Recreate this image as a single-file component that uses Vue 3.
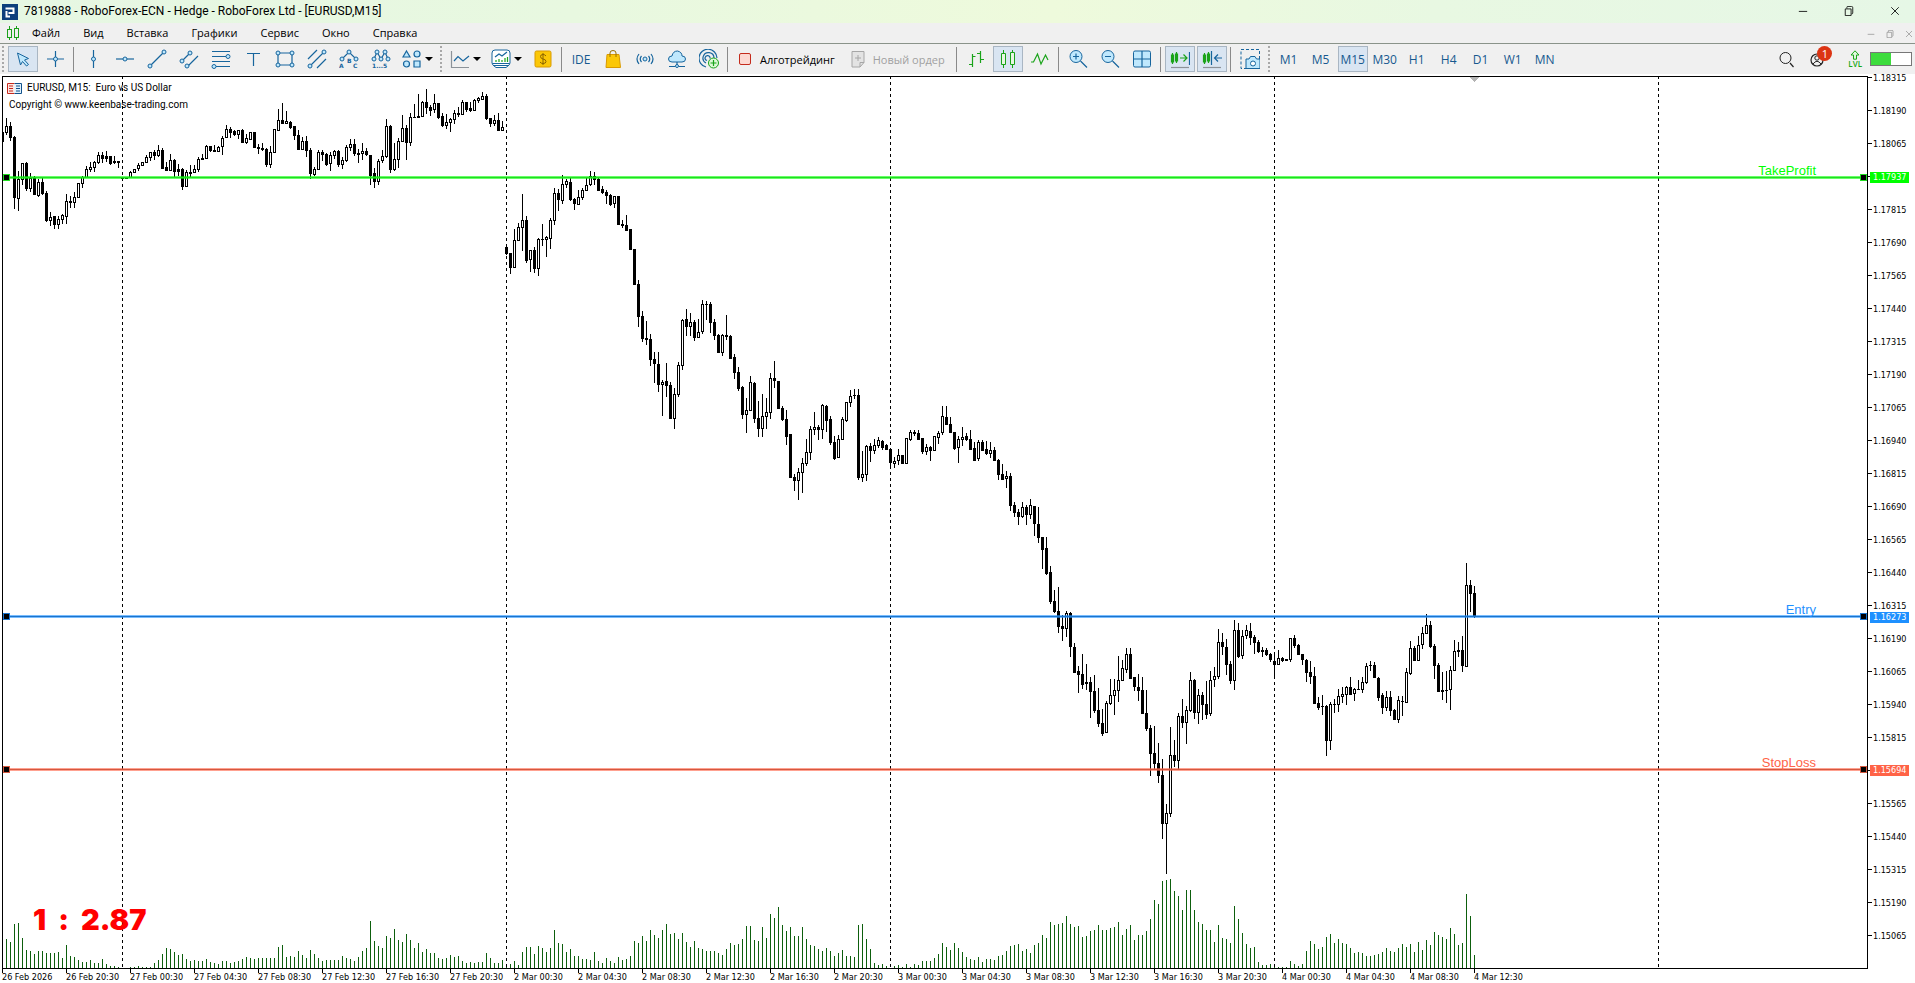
<template>
  <div class="terminal">
    <header class="title-bar">
      <svg class="logo" viewBox="0 0 16 16">
        <rect width="16" height="16" fill="#0d3f7c" />
        <path d="M3.500 4.500H11.500V9H6.500M4.500 7V12.500H8" fill="none" stroke="#fff" stroke-width="2" />
      </svg>
      <h1>7819888 - RoboForex-ECN - Hedge - RoboForex Ltd - [EURUSD,M15]</h1>
      <div class="window-buttons">
        <button v-for="b in windowButtons" :key="b.label" :aria-label="b.label">
          <svg viewBox="0 0 12 12" v-html="b.icon"></svg>
        </button>
      </div>
    </header>

    <nav class="menu-bar">
      <svg class="menu-logo" viewBox="0 0 14 14">
        <path d="M3.500 0V14M10.500 0V14" stroke="#1ba11b" />
        <rect x="1.500" y="3.500" width="4" height="8" fill="#f0f0f0" stroke="#1ba11b" />
        <rect x="8.500" y="2.500" width="4" height="9" fill="#f0f0f0" stroke="#1ba11b" />
      </svg>
      <button v-for="item in menu" :key="item" class="menu-item">{{ item }}</button>
      <div class="mdi-buttons">
        <button v-for="b in windowButtons" :key="b.label" :aria-label="b.label + ' chart'">
          <svg viewBox="0 0 12 12" v-html="b.icon"></svg>
        </button>
      </div>
    </nav>

    <div class="toolbar">
      <template v-for="(item, i) in tools" :key="i">
        <span v-if="item.type === 'grip'" class="grip"></span>
        <span v-else-if="item.type === 'sep'" class="sep"></span>
        <button
          v-else
          class="tool"
          :class="[item.type, { active: item.active }]"
          :disabled="item.disabled"
          :aria-label="item.text ? null : item.icon"
        >
          <svg v-if="item.icon" class="tool-icon" viewBox="0 0 20 20" v-html="icons[item.icon]"></svg>
          <span v-if="item.text">{{ item.text }}</span>
          <i v-if="item.type === 'drop'" class="arrow"></i>
        </button>
      </template>
      <div class="status">
        <button class="tool" aria-label="search">
          <svg class="tool-icon" viewBox="0 0 20 20" v-html="icons.search"></svg>
        </button>
        <button class="tool account" aria-label="account">
          <svg class="tool-icon" viewBox="0 0 20 20" v-html="icons.account"></svg>
          <b class="badge">1</b>
        </button>
        <div class="level">
          <svg viewBox="0 0 10 10"><path d="M5 .800L9 5H6.500V9.200H3.500V5H1z" fill="#e2f6df" stroke="#18a818" /></svg>
          <span>LVL</span>
        </div>
        <div class="battery"><i></i></div>
      </div>
    </div>

    <main class="chart">
      <div class="plot">
        <svg class="canvas" viewBox="0 0 1864 891" preserveAspectRatio="none" shape-rendering="crispEdges">
          <path :d="volumePath" fill="#0d5f0d" />
          <line
            v-for="x in sessions"
            :key="x"
            :x1="x"
            :x2="x"
            y1="-1"
            y2="891"
            stroke="#000"
            stroke-dasharray="3 3"
          />
          <path :d="candlePaths.black" fill="#000" />
          <path :d="candlePaths.white" fill="#fff" />
          <path d="M1467 0h9l-4.500 5z" fill="#b4b4b4" />
        </svg>
        <div
          v-for="lv in levels"
          :key="lv.name"
          class="level-line"
          :style="{ top: toPercent(lv.y), '--color': lv.color, '--core': lv.core }"
        >
          <i class="handle"></i>
          <span>{{ lv.name }}</span>
          <i class="handle"></i>
        </div>
        <div class="chart-title">
          <svg viewBox="0 0 15 11">
            <path d="M7.500 .500H.500V10.500H7.500" fill="#fde6e2" stroke="#c5281c" />
            <path d="M7.500 .500H14.500V10.500H7.500" fill="#dff0fc" stroke="#11528c" />
            <path d="M2 3H6M2 5.500H6M2 8H6" stroke="#c5281c" />
            <path d="M9 3H13M9 5.500H13M9 8H13" stroke="#11528c" />
          </svg>
          <span>EURUSD, M15:&nbsp; Euro vs US Dollar</span>
        </div>
        <div class="copyright">Copyright © www.keenbase-trading.com</div>
        <div class="ratio"><span>1</span><span>:</span><span>2.87</span></div>
      </div>

      <div class="price-axis">
        <div class="price-list">
          <div v-for="p in prices" :key="p" class="price">
            <span v-if="!covered.includes(p)">{{ p }}</span>
          </div>
        </div>
        <div
          v-for="lv in levels"
          :key="lv.name"
          class="price-tag"
          :style="{ top: toPercent(lv.y), background: lv.color }"
        >{{ lv.price }}</div>
      </div>

      <div class="time-axis">
        <span v-for="t in times" :key="t">{{ t }}</span>
      </div>
    </main>
  </div>
</template>

<script setup>
import { computed } from 'vue'

const menu = ['Файл', 'Вид', 'Вставка', 'Графики', 'Сервис', 'Окно', 'Справка']

const windowButtons = [
  { label: 'minimize', icon: '<path d="M1 6.500H11" stroke="currentColor"/>' },
  {
    label: 'restore',
    icon: '<path d="M1.500 3.500H8.500V11.500H1.500zM3.500 3V1.500Q3.500 .500 4.500 .500H9Q10.500 .500 10.500 2V8.500Q10.500 9.500 9 9.500" fill="none" stroke="currentColor"/>',
  },
  { label: 'close', icon: '<path d="M1.500 1.500L10.500 10.500M10.500 1.500L1.500 10.500" stroke="currentColor"/>' },
]

// ---------- toolbar icons, 20x20 ----------
const BLUE = '#17659d'
const SKY = '#bfe8fd'
const GREEN = '#19a319'

const dots = (points, r = 2) =>
  points.map(([x, y]) => `<circle cx="${x}" cy="${y}" r="${r}" fill="${SKY}" stroke="${BLUE}"/>`).join('')
const lines = (d, color = BLUE) => `<path d="${d}" fill="none" stroke="${color}" stroke-width="1.200"/>`
const letters = (text, x) =>
  `<text x="${x}" y="19" font-size="6" font-weight="700" font-family="DejaVu Sans" fill="${BLUE}">${text}</text>`

const icons = {
  cursor: `<path d="M4.500 4L15.500 9.500L11.500 11L15.500 15.500L13.500 17L9.500 12.500L7.500 16z" fill="${SKY}" stroke="${BLUE}"/>`,
  crosshair: lines('M10.500 2V18M2 10H19') + dots([[10.5, 10]]),
  vertical: lines('M10.500 1V19') + dots([[10.5, 10]]),
  horizontal: lines('M1 10H19') + dots([[10, 10]]),
  trend: lines('M3 17L17 3') + dots([[3, 17], [17, 3]]),
  channel: lines('M3 12L11 4M9 17L19 7') + dots([[3, 12], [11, 4], [8, 17]]),
  fibo: lines('M1 2.500H19M1 7.500H15M1 12.500H19M5 17.500H19') + dots([[17, 7.5], [3, 17.5]]),
  text: lines('M4 4.500H17M10.500 4.500V17'),
  rectangle: lines('M3 4H17V16H3z') + dots([[3, 4], [17, 4], [3, 16], [17, 16]]),
  fork: lines('M1 10L10 1M3 17L17 3M10 19L19 10') + dots([[3, 17], [17, 3]]),
  abc: lines('M3 10L10 3L17 10') + dots([[3, 10], [10, 3], [17, 10]]) + letters('A', 0) +
    `<text x="8" y="14" font-size="6" font-weight="700" font-family="DejaVu Sans" fill="${BLUE}">B</text>` + letters('C', 14),
  waves: lines('M3 10L6 3L10 10L14 3L17 10') + dots([[3, 10], [6, 3], [10, 10], [14, 3], [17, 10]]) + letters('1...5', 1),
  shapes: `<g fill="${SKY}" stroke="${BLUE}" stroke-width="1.200"><path d="M4.500 2L8 8H1z"/><circle cx="15" cy="5" r="3"/><circle cx="4.500" cy="15" r="3"/><path d="M12 12H18V18H12z"/></g>`,
  line: lines('M1.500 2V18.500H19', '#8c9298') + lines('M4 12L8 7.500L13 12L19 7'),
  indicators: `<path d="M1 4Q1 1 4 1H16Q19 1 19 4V14Q19 16 15 18.500H5Q1 16 1 14z" fill="#fff" stroke="${BLUE}"/>` +
    lines('M4 8L8 5L11 7L16 3M1.500 14.500H18.500M3 16.500H17') + lines('M5 13V11M8 13V10M11 13V11M14 13V9M16.500 13V8', GREEN),
  dollar: '<rect x="2" y="2" width="16" height="16" rx="1.500" fill="#fbc707" stroke="#d99a00"/><path d="M13 7Q12 5.500 10 5.500Q7.500 5.500 7.500 7.500Q7.500 9.500 10 10Q13 10.500 13 12.500Q13 14.500 10 14.500Q8 14.500 7 13M10 4V16" fill="none" stroke="#8a6400"/>',
  market: '<path d="M4 5.500H16L17.500 18.500H3z" fill="#fbc707" stroke="#d99a00"/><path d="M7 8V4Q7 1.500 10 1.500Q13 1.500 13 4V8" fill="none" stroke="#9a7000"/>',
  signals: dots([[10, 10]]) + lines('M6.500 13Q4 10 6.500 7M4 15Q0 10 4 5M13.500 13Q16 10 13.500 7M16 15Q20 10 16 5'),
  cloud: `<path d="M5 13Q1.500 13 1.500 10Q1.500 7 5 7Q6 2 10.500 2Q15 3 15 7Q18.500 7 18.500 10Q18.500 13 15 13z" fill="${SKY}" stroke="${BLUE}"/>` + lines('M10 13V16M2 17.500H8M12 17.500H18') + dots([[10, 17]], 1.5),
  radar: lines('M7 18A9 9 0 1 1 18 9M7 14A5.500 5.500 0 1 1 15 9M8 11.500A2.500 2.500 0 1 1 11 9.500') +
    `<circle cx="14.500" cy="14" r="5" fill="#dcf8d7" stroke="${GREEN}"/>` + lines('M11.500 14H17.500M14.500 11V17', GREEN),
  algo: '<rect x="4.500" y="4.500" width="11" height="11" rx="1.500" fill="#fcd9d2" stroke="#c42b1c"/>',
  order: '<path d="M4 2.500H16V13.500L12 18H4z" fill="#e3e3e3" stroke="#a6a6a6"/><path d="M16 13.500H12V18M7 9H13M10 6V12" fill="none" stroke="#a6a6a6"/>',
  bars: lines('M6.500 5V18M3 15.500H6.500M6.500 7.500H9.500M14.500 2V14M11 4.500H14.500M14.500 10.500H18', GREEN),
  candles: `<g fill="#e8f6e3" stroke="${GREEN}"><path d="M5.500 1V19M14.500 1V19"/><path d="M3.500 4.500H7.500V15.500H3.500zM12.500 3.500H16.500V15.500H12.500z"/></g>`,
  curve: lines('M1 13H3.500L7.500 5L11 15L15.500 6L18 11', GREEN),
  zoomIn: `<circle cx="8" cy="7.500" r="6" fill="${SKY}" stroke="${BLUE}"/>` + lines('M12.500 12L19 18.500M5 7.500H11M8 4.500V10.500'),
  zoomOut: `<circle cx="8" cy="7.500" r="6" fill="${SKY}" stroke="${BLUE}"/>` + lines('M12.500 12L19 18.500M5 7.500H11'),
  tile: `<rect x="1.500" y="2" width="17" height="16" rx="1.500" fill="${SKY}" stroke="${BLUE}"/>` + lines('M10 2V18M1.500 10H18.500'),
  autoscroll: lines('M19.500 3V16') + lines('M2.500 4V15M6.500 3V14M1.500 6H3.500V13H1.500zM5.500 5H7.500V12H5.500zM10 9H17M13.500 5.500L17 9L13.500 12.500', GREEN) + lines('M1 18.500H19', '#8c9298'),
  shift: lines('M9.500 2V16M20 9H13M16 5.500L12.500 9L16 12.500') + lines('M2.500 4V15M6.500 3V14M1.500 6H3.500V13H1.500zM5.500 5H7.500V12H5.500z', GREEN) + lines('M1 18.500H19', '#8c9298'),
  camera: `<path d="M1 .500H19.500V19.500H1z" fill="none" stroke="${BLUE}" stroke-dasharray="3 2"/><path d="M6 10H9L10.500 7.500H15L16.500 10H20V19.500H6z" fill="${SKY}" stroke="${BLUE}"/><circle cx="13" cy="14.500" r="2.500" fill="#fff" stroke="${BLUE}"/>`,
  search: lines('M14 14L17.500 18', '#222') + '<circle cx="9.500" cy="9" r="5.500" fill="none" stroke="#222"/>',
  account: '<circle cx="9" cy="11" r="6" fill="none" stroke="#222" stroke-width="1.200"/><circle cx="9" cy="9" r="2.200" fill="none" stroke="#222"/><path d="M5 15Q9 9.500 13 15" fill="none" stroke="#222"/>',
}

const icon = (...names) => names.map((name) => ({ type: 'icon', icon: name }))
const sep = { type: 'sep' }
const grip = { type: 'grip' }

const tools = [
  grip,
  { type: 'icon', icon: 'cursor', active: true },
  ...icon('crosshair'),
  sep,
  ...icon('vertical', 'horizontal', 'trend', 'channel', 'fibo', 'text', 'rectangle', 'fork', 'abc', 'waves'),
  { type: 'drop', icon: 'shapes' },
  grip,
  { type: 'drop', icon: 'line' },
  { type: 'drop', icon: 'indicators' },
  ...icon('dollar'),
  sep,
  { type: 'label', text: 'IDE' },
  ...icon('market', 'signals', 'cloud', 'radar'),
  sep,
  { type: 'wide', icon: 'algo', text: 'Алготрейдинг' },
  { type: 'wide', icon: 'order', text: 'Новый ордер', disabled: true },
  sep,
  ...icon('bars'),
  { type: 'icon', icon: 'candles', active: true },
  ...icon('curve'),
  sep,
  ...icon('zoomIn', 'zoomOut', 'tile'),
  sep,
  { type: 'icon', icon: 'autoscroll', active: true },
  { type: 'icon', icon: 'shift', active: true },
  sep,
  ...icon('camera'),
  grip,
  ...['M1', 'M5', 'M15', 'M30', 'H1', 'H4', 'D1', 'W1', 'MN'].map((text) => ({
    type: 'label',
    text,
    active: text === 'M15',
  })),
]

// ---------- axes ----------
const prices = Array.from({ length: 27 }, (_, i) => ((118315 - i * 125) / 100000).toFixed(5))
// these two sit under the level tags
const covered = ['1.17940', '1.15690']

const hours = ['00:30', '04:30', '08:30', '12:30', '16:30', '20:30']
const times = [
  '26 Feb 2026',
  '26 Feb 20:30',
  ...['27 Feb', '2 Mar', '3 Mar'].flatMap((day) => hours.map((h) => `${day} ${h}`)),
  ...hours.slice(0, 4).map((h) => `4 Mar ${h}`),
]

const levels = [
  { name: 'TakeProfit', price: '1.17937', y: 100, color: '#00ff00', core: '#22dd22' },
  { name: 'Entry', price: '1.16273', y: 539, color: '#1e90ff', core: '#1b74cc' },
  { name: 'StopLoss', price: '1.15694', y: 692, color: '#ff6347', core: '#d4583f' },
]
const toPercent = (y) => `${((y + 0.5) / 891) * 100}%`

const sessions = [119.5, 503.5, 887.5, 1271.5, 1655.5]

// ---------- candles ----------
// [open, high, low, close], offset down from the top of the block
const blocks = [
  {
    top: 3,
    bars: [
      [52,52,61,61],[52,38,54,46],[46,42,60,57],[57,56,128,117],[118,91,130,99],[99,83,104,83],[83,82,110,108],[108,93,111,98],
      [98,96,114,114],[115,99,116,102],[102,98,114,113],[113,111,141,140],[140,132,145,137],[136,136,148,144],[144,136,148,139],
      [139,134,143,135],[136,114,143,121],[121,116,127,122],[122,112,127,117],[117,103,117,103],[103,96,107,97],[97,86,97,89],
      [89,82,91,87],[87,81,91,82],[82,72,83,75],[75,72,82,78],[76,71,81,78],[76,76,84,83],[81,76,83,82],[81,81,87,82],
      [98,98,98,98],[98,98,98,98],[97,91,97,92],[92,89,92,89],[88,83,90,85],[85,82,85,82],[82,75,82,77],[77,72,80,72],
      [72,70,79,75],[75,65,76,70],[70,68,88,88],[87,82,90,90],[90,74,90,80],[80,79,96,91],[89,84,95,91],[89,88,109,106],
      [106,90,106,92],[92,85,97,93],[92,85,92,89],[89,77,91,79],[79,74,79,78],[78,65,78,66],[66,66,71,70],[70,65,71,71],
      [71,66,71,67],[66,56,74,58],[57,45,57,49],[49,47,57,52],[51,50,55,54],[54,50,58,50],[50,49,62,62],[62,54,63,58],
      [59,52,59,52],[52,52,67,67],[67,64,73,68],[68,63,70,69],[69,68,86,84],[84,66,87,72],[72,49,72,49],[50,29,50,40],
      [40,23,43,43],[43,31,43,41],[42,41,48,47],[46,46,59,55],[55,50,69,69],[69,57,69,61],[61,56,76,70],[70,68,98,93],
      [94,87,95,89],[89,70,89,72],[72,70,80,74],[74,73,85,84],[83,72,90,75],[75,70,78,71],[71,70,86,84],[84,77,88,80],
      [80,65,81,67],[67,59,70,64],[64,59,75,73],[73,69,82,74],[73,63,79,71],[71,68,75,74],[75,75,104,95],[93,88,107,101],
      [101,79,104,81],[80,70,82,76],[76,39,77,46],[46,45,92,89],[89,63,90,79],[79,58,87,61],[61,35,61,48],[48,45,79,62],
      [62,33,65,37],[37,24,37,37],[37,14,37,36],[36,21,36,22],[22,9,33,27],[27,25,35,30],[29,14,32,23],[23,23,38,37],
      [36,33,46,45],[45,34,48,42],[42,38,51,39],[39,30,43,33],[33,27,36,34],[34,20,34,22],[22,22,31,29],[28,22,31,30],
      [30,19,30,20],[20,17,22,18],[19,12,19,16],[16,14,39,38],[38,38,46,43],[43,35,45,40],[40,33,50,50],[50,41,50,47],
    ],
  },
  {
    top: 83,
    bars: [
      [87,86,94,93],[93,93,113,107],[107,69,107,80],[80,63,80,67],[67,34,90,60],[60,56,102,100],[99,90,111,90],[90,87,112,108],
      [108,78,115,79],[79,64,85,79],[79,76,96,77],[78,58,88,60],[60,28,64,33],[33,29,50,39],[40,15,43,24],[24,19,27,21],
      [22,18,40,39],[39,38,49,43],[44,30,44,37],[37,28,39,30],[30,17,30,25],[24,11,25,16],[16,12,24,19],[19,18,30,30],
      [29,26,33,32],[32,30,43,35],[35,34,45,44],[43,36,47,36],[36,36,64,64],[64,60,67,65],[65,55,70,70],[69,69,89,89],
      [89,89,124,124],[124,120,166,156],[156,151,181,178],[178,161,184,179],[179,174,205,199],[199,192,222,203],[204,192,231,224],
      [224,220,255,222],[221,203,236,225],[225,222,258,258],[258,228,268,234],[234,202,236,205],[205,159,209,160],[159,149,175,166],
      [166,153,175,162],[162,160,180,177],[177,159,177,172],[171,140,173,144],[144,141,159,144],[144,142,172,162],[162,159,179,175],
      [175,174,192,192],[192,174,195,175],[175,155,179,176],[176,175,198,198],[197,194,218,212],[212,207,230,228],[227,226,258,254],
      [254,238,272,250],[250,216,250,222],[223,222,262,258],[258,241,276,268],[268,234,276,256],[256,238,268,252],[252,213,258,218],
      [218,201,227,220],[221,221,248,248],[248,246,260,259],[259,250,284,276],[274,274,317,317],[317,314,330,320],[320,308,339,312],
      [312,298,332,303],[303,279,305,292],[292,266,299,269],[269,252,274,267],[267,265,279,269],[269,244,278,245],[246,245,271,260],
      [259,256,284,282],[282,276,299,298],[297,275,297,279],[279,257,279,259],[260,242,261,242],[242,230,246,236],[235,229,238,235],
      [235,229,319,317],[317,291,321,314],[314,285,320,286],[286,283,301,290],[290,279,293,285],[285,277,287,280],[281,280,289,287],
      [285,284,289,289],
    ],
  },
  {
    top: 303,
    bars: [
      [69,68,88,82],[83,77,87,81],[80,69,84,75],[75,75,83,83],[83,58,83,58],[59,50,60,52],[52,50,55,53],[53,50,59,59],
      [58,58,73,71],[71,64,74,67],[67,66,80,70],[70,56,70,56],[57,51,63,53],[52,26,54,36],[37,26,44,44],[44,37,52,52],
      [52,52,69,68],[67,56,82,59],[59,47,65,57],[56,53,60,59],[59,50,69,69],[68,62,80,80],[78,60,80,62],[62,60,70,70],
      [69,61,74,73],[73,62,77,70],[70,67,80,80],[80,79,99,94],[94,84,99,99],[98,91,107,96],[96,93,130,125],[125,122,136,132],
      [132,129,144,136],[136,122,137,127],[127,125,144,134],[134,119,138,125],[126,126,155,143],[144,127,162,157],[157,157,188,169],
      [168,157,194,193],[192,186,223,221],[221,210,232,231],[231,207,252,246],[246,235,260,248],[248,231,256,233],[233,232,276,266],
      [267,263,292,292],[291,286,312,294],[294,274,308,304],[302,284,309,303],[302,297,337,311],[311,295,332,330],[330,308,346,343],
    ],
  },
  {
    top: 483,
    bars: [
      [163,149,175,173],[172,141,172,143],[143,119,144,135],[135,119,154,130],[130,96,141,120],[120,100,120,108],[109,88,112,94],
      [94,88,118,118],[117,117,130,126],[127,114,140,130],[130,117,153,153],[153,130,170,168],[168,165,215,193],[193,166,208,203],
      [203,183,222,215],[215,199,278,263],[263,244,313,253],[253,167,256,195],[195,180,206,200],[200,153,209,156],[156,139,167,162],
      [162,146,183,150],[150,112,151,120],[120,119,158,152],[152,129,163,135],[135,132,159,144],[144,121,158,154],[153,111,155,120],
      [119,107,126,116],[116,69,118,82],[82,73,94,86],[87,79,114,104],[104,101,123,120],[120,60,129,70],[70,63,97,96],
      [95,70,98,76],[75,65,78,70],[71,63,84,77],[77,75,93,82],[82,80,92,91],[90,87,96,91],[90,88,95,94],[94,93,101,99],
      [101,92,118,104],[104,90,104,98],[98,97,101,100],[99,99,100,100],[99,78,101,78],[78,75,87,85],[85,84,94,94],[94,94,104,99],
      [100,99,121,112],[112,101,123,116],[116,107,143,143],[143,137,149,147],[146,135,154,146],[146,145,195,180],[180,142,189,144],
      [144,139,152,144],[144,129,151,136],[136,127,142,134],[134,126,144,127],[127,117,134,134],[133,128,140,129],[129,120,129,129],
      [129,117,132,122],[122,103,123,106],[105,101,110,105],[105,102,117,117],[118,117,140,137],[135,133,153,147],[147,131,150,137],
      [137,131,155,150],[150,149,159,159],[159,136,162,140],[141,136,155,141],[142,108,142,112],[113,81,114,88],[88,86,100,100],
      [100,76,100,85],[84,67,88,73],[73,54,73,65],[65,61,87,86],[86,84,118,105],[105,103,131,131],[130,112,139,131],[130,111,142,130],
      [129,106,149,110],[110,80,110,91],[90,82,96,91],[90,76,111,105],[106,3,106,25],[25,20,51,33],[33,26,57,56],
    ],
  },
]

const rect = (x, y, w, h) => `M${x} ${y}h${w}v${h}h${-w}z`

const candlePaths = computed(() => {
  let black = ''
  let white = ''
  const all = blocks.flatMap((b) => b.bars.map((bar) => bar.map((v) => v + b.top)))
  all.forEach(([open, high, low, close], i) => {
    const x = i * 4 - 1
    const top = Math.min(open, close)
    const height = Math.abs(open - close) + 1
    black += rect(x, high, 1, low - high + 1) + rect(x - 1, top, 3, height)
    if (close < open && height > 2) white += rect(x, top + 1, 1, height - 2)
  })
  return { black, white }
})

// ---------- tick volumes ----------
const volumes = [
  0,29,26,44,45,30,18,17,14,17,17,15,15,15,16,10,23,12,11,8,6,6,8,5,5,9,4,2,2,1,0,0,1,1,2,1,1,1,5,8,14,20,19,16,13,14,9,7,8,7,7,9,6,5,4,7,7,5,6,7,
  9,11,10,9,10,10,10,10,10,21,23,11,12,11,17,13,10,18,14,10,7,8,8,8,8,12,10,9,7,11,17,20,47,27,22,20,32,30,39,28,26,34,28,20,25,16,19,15,15,10,9,10,
  13,11,12,7,5,6,5,6,6,15,10,5,5,8,4,4,7,3,16,21,21,14,22,20,16,20,38,25,24,16,19,12,12,9,9,8,16,7,5,10,7,5,11,8,9,12,27,25,
  32,27,38,33,30,38,44,34,35,29,35,26,21,27,20,19,17,17,17,15,13,19,25,23,24,29,42,42,28,27,41,30,54,50,61,43,37,41,32,32,41,29,23,22,19,17,20,17,
  12,15,18,12,12,11,43,44,29,19,5,3,4,2,0,2,3,1,4,1,4,3,7,7,7,10,14,25,21,18,25,20,16,11,9,8,11,6,9,9,8,12,13,17,22,23,24,17,19,15,23,25,33,30,46,43,
  44,45,52,44,41,42,31,32,37,38,43,38,38,40,41,46,33,39,43,28,33,33,37,49,68,64,87,88,89,77,72,58,78,78,58,46,44,38,38,26,43,30,29,25,62,49,35,24,20,
  21,6,3,3,4,4,1,1,1,7,4,2,4,17,27,24,19,21,31,34,25,29,25,24,20,15,16,15,12,12,13,14,16,20,17,16,20,24,21,24,16,26,18,28,23,36,33,31,29,40,34,23,25,
  74,52,13,
]
const volumePath = volumes.map((v, i) => rect(i * 4 - 1, 891 - v, 1, v)).join('')
</script>

<style>
body {
  margin: 0;
  overflow: hidden;
}
</style>

<style scoped>
.terminal {
  display: flex;
  flex-direction: column;
  height: 100vh;
  background: #fff;
  color: #000;
  font-family: "Open Sans", "Noto Sans", sans-serif;
  font-size: 12px;
}

button {
  padding: 0;
  border: 0;
  background: none;
  color: inherit;
  font: inherit;
}

/* ===== title bar ===== */
.title-bar {
  display: flex;
  align-items: center;
  height: 23px;
  padding-left: 2px;
  background: linear-gradient(90deg, #e6f7e3 0%, #e8f8e0 30%, #eefadc 55%, #e8f8e2 75%, #e6f7e6 100%);
}

.logo {
  width: 16px;
  height: 16px;
  margin-right: 6px;
}

h1 {
  margin: 0;
  font-family: Roboto, "Open Sans", sans-serif;
  font-size: 12px;
  font-weight: 400;
  line-height: 23px;
}

.window-buttons,
.mdi-buttons {
  display: flex;
  margin-left: auto;
}

.window-buttons {
  gap: 14px;
  padding-right: 4px;
}

.window-buttons button {
  width: 32px;
  height: 20px;
}

.window-buttons svg {
  width: 10px;
  height: 10px;
}

/* ===== menu ===== */
.menu-bar {
  display: flex;
  align-items: center;
  gap: 23px;
  height: 20px;
  padding-left: 6px;
  border-bottom: 1px solid #8a938a;
  background: #f0f0f0;
}

.menu-logo {
  width: 14px;
  height: 14px;
  margin-right: -11px;
}

.menu-item {
  font-size: 11px;
  line-height: 18px;
}

.mdi-buttons {
  gap: 7px;
  color: #8a8a8a;
}

.mdi-buttons button {
  width: 12px;
  height: 18px;
}

.mdi-buttons svg {
  width: 8px;
  height: 8px;
}

/* ===== toolbar ===== */
.toolbar {
  display: flex;
  align-items: center;
  height: 30px;
  margin-bottom: 2px;
  background: #f0f0f0;
}

.tool {
  display: flex;
  align-items: center;
  justify-content: center;
  box-sizing: border-box;
  width: 30px;
  height: 26px;
  margin: 0 1px;
  color: #17598f;
}

.tool.active {
  border: 1px solid #a9b6c3;
  background: #d9e5f2;
}

.tool-icon {
  flex: none;
  width: 20px;
  height: 20px;
}

.tool.drop {
  width: 39px;
  gap: 3px;
}

.arrow {
  border: 4px solid transparent;
  border-top: 4px solid #000;
  border-bottom: 0;
}

.tool.wide {
  width: auto;
  padding: 0 8px 0 3px;
  gap: 5px;
  color: #000;
  font-size: 11px;
}

.tool.wide:disabled {
  color: #a0a0a0;
}

.grip {
  width: 2px;
  height: 26px;
  margin: 0 3px 0 2px;
  background: repeating-linear-gradient(#a8a8a8 0 2px, transparent 2px 4px);
}

.sep {
  width: 1px;
  height: 25px;
  margin: 0 3px 0 2px;
  background: #8a8a8a;
}

.status {
  display: flex;
  align-items: center;
  margin-left: auto;
  padding-right: 3px;
}

.account {
  position: relative;
}

.badge {
  position: absolute;
  top: 0;
  right: 1px;
  width: 15px;
  height: 15px;
  border-radius: 8px;
  background: #dc3413;
  color: #fff;
  font-size: 11px;
  font-weight: 400;
  line-height: 15px;
}

.level {
  display: flex;
  flex-direction: column;
  align-items: center;
  margin: 0 8px 0 14px;
  color: #18a818;
  font-size: 8px;
  font-weight: 600;
  line-height: 8px;
}

.level svg {
  width: 10px;
  height: 10px;
}

.battery {
  box-sizing: border-box;
  width: 42px;
  height: 14px;
  border: 1px solid #777;
  background: #fff;
}

.battery i {
  display: block;
  width: 50%;
  height: 12px;
  background: #3ddc3d;
}

/* ===== chart ===== */
.chart {
  flex: 1;
  display: grid;
  grid-template-columns: minmax(0, 1fr) 47px;
  grid-template-rows: minmax(0, 1fr) 14px;
  padding-left: 2px;
  font-family: "DejaVu Sans Condensed", "Noto Sans", sans-serif;
  font-size: 9px;
}

.plot {
  position: relative;
  border: 1px solid #000;
  overflow: hidden;
}

.canvas {
  display: block;
  width: 100%;
  height: 100%;
}

.level-line {
  position: absolute;
  left: 0;
  right: 0;
  display: flex;
  align-items: center;
  justify-content: space-between;
  height: 7px;
  margin-top: -4px;
  background:
    linear-gradient(var(--core), var(--core)) center / 100% 1px no-repeat,
    linear-gradient(color-mix(in srgb, var(--color) 60%, transparent), color-mix(in srgb, var(--color) 60%, transparent)) center / 100% 3px no-repeat;
}

.level-line span {
  position: absolute;
  right: 51px;
  bottom: 4px;
  color: var(--color);
  font-family: "Liberation Sans", Arial, sans-serif;
  font-size: 13px;
  line-height: 13px;
}

.handle {
  width: 5px;
  height: 5px;
  border: 1px solid var(--core);
  background: #000;
}

.chart-title,
.copyright {
  font-family: Roboto, "Noto Sans", sans-serif;
  font-size: 10px;
  line-height: 12px;
}

.chart-title {
  position: absolute;
  top: 5px;
  left: 4px;
  display: flex;
  align-items: center;
  gap: 5px;
}

.chart-title svg {
  width: 15px;
  height: 11px;
}

.copyright {
  position: absolute;
  top: 22px;
  left: 6px;
}

.ratio {
  position: absolute;
  left: 30px;
  bottom: 32px;
  display: flex;
  gap: 12px;
  color: #f00;
  font-family: Inter, "Liberation Sans", sans-serif;
  font-size: 29px;
  font-weight: 900;
  line-height: 32px;
}

.price-axis {
  position: relative;
}

.price-list {
  display: flex;
  flex-direction: column;
  height: calc(100% - 2px);
  margin-top: -15px;
}

.price {
  flex: 1;
  display: flex;
  align-items: center;
  gap: 1px;
}

.price::before {
  content: "";
  width: 4px;
  height: 1px;
  background: #000;
}

.price-tag {
  position: absolute;
  left: 2px;
  width: 36px;
  height: 11px;
  margin-top: -5px;
  padding-left: 3px;
  color: #fff;
  line-height: 11px;
}

.time-axis {
  display: flex;
  white-space: nowrap;
}

.time-axis span {
  position: relative;
  flex: 0 0 calc(100% * 64 / 1866);
  padding-top: 3px;
  line-height: 11px;
  box-sizing: border-box;
}

.time-axis span::before {
  content: "";
  position: absolute;
  top: 0;
  left: 0;
  width: 1px;
  height: 4px;
  background: #000;
}
</style>
